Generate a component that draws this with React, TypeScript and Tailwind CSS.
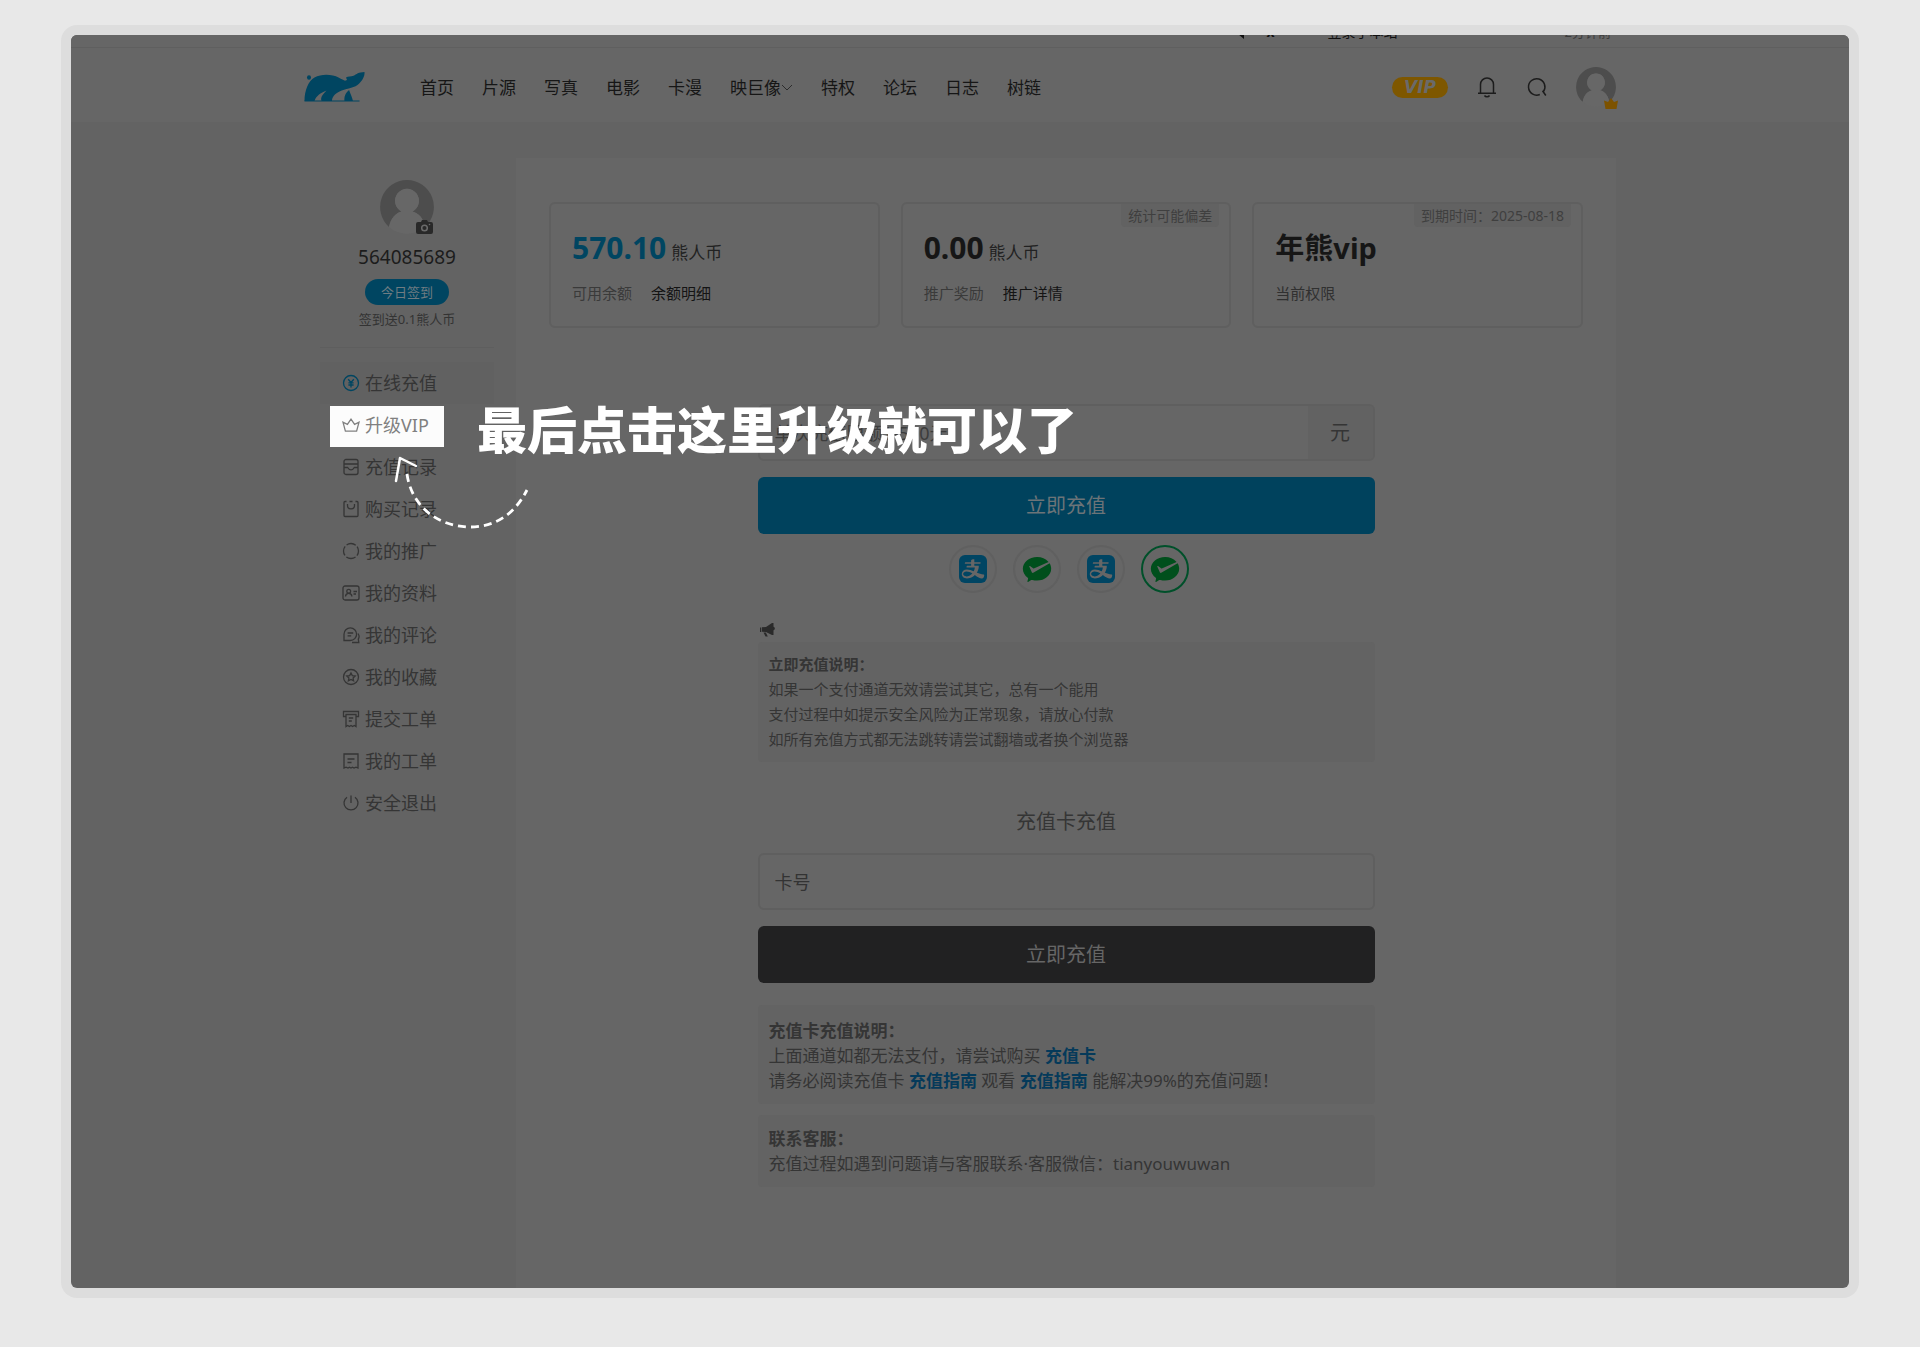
import type { ReactNode } from "react";
import { AiFillAlipaySquare } from "react-icons/ai";
import { RiWechatPayFill } from "react-icons/ri";

const navItems = ["首页", "片源", "写真", "电影", "卡漫", "映巨像", "特权", "论坛", "日志", "树链"];

type MenuItem = { label: string; icon: ReactNode; state?: "active" | "spot" };

const menuItems: MenuItem[] = [
  {
    label: "在线充值",
    state: "active",
    icon: (
      <>
        <circle cx="9" cy="9" r="7.5" />
        <path d="M6.2 5.2 9 8.4l2.8-3.2M9 8.4v5M6.4 8.8h5.2M6.4 11h5.2" />
      </>
    )
  },
  {
    label: "升级VIP",
    state: "spot",
    icon: <path d="M3.4 15.2h11.2L17 6.2l-4.4 2.2L9 3.2 5.4 8.4 1 6.2z" />
  },
  {
    label: "充值记录",
    icon: (
      <>
        <rect x="2" y="1.5" width="14" height="15" rx="2" />
        <path d="M2 6h14M2 9.500h3.600c.5 0 .8 2.400 3.400 2.400s2.900-2.400 3.400-2.400H16" />
      </>
    )
  },
  {
    label: "购买记录",
    icon: (
      <>
        <path d="M4.500 1.500H3q-1 0-1 1v13q0 1 1 1h12q1 0 1-1v-13q0-1-1-1h-1.500M7.500 1.500h3" />
        <path d="M5.500 4v1.500c0 4.600 7 4.600 7 0V4" />
      </>
    )
  },
  {
    label: "我的推广",
    icon: <circle cx="9" cy="9" r="7.5" strokeDasharray="9.800 1.980" strokeDashoffset="4.900" />
  },
  {
    label: "我的资料",
    icon: (
      <>
        <rect x="1" y="2" width="16" height="14" rx="2" />
        <circle cx="6.700" cy="7.200" r="1.900" />
        <path d="M3.500 12.500c.2-4.200 6.200-4.200 6.400 0M11.500 7.500H15M11.500 10h2.500" />
      </>
    )
  },
  {
    label: "我的评论",
    icon: (
      <>
        <path d="M2 14.500V8.200a6.300 6.300 0 1 1 6.300 6.300zM5.600 7h5.600M5.600 9.800h3.600" />
        <path d="M16 7.500c1.400 2 1.200 4.200.3 5.600l.5 3.400H10" />
      </>
    )
  },
  {
    label: "我的收藏",
    icon: (
      <>
        <circle cx="9" cy="9" r="7.5" />
        <path d="m9 5 1.300 2.600 2.900.4-2.100 2 .5 2.900L9 11.500l-2.600 1.400.5-2.900-2.100-2 2.900-.4z" />
      </>
    )
  },
  {
    label: "提交工单",
    icon: (
      <>
        <path d="M4 6.500H1.500v-5h15v5H14" />
        <path d="M4 4.500h10v12l-1.700-1-1.700 1-1.600-1-1.600 1-1.700-1-1.700 1zM6.800 8h4.400M6.800 11h3" />
      </>
    )
  },
  {
    label: "我的工单",
    icon: <path d="M2 2h14v14l-2-.8-2 .8-1.500-.8L9 16l-1.500-.8L6 16l-2-.8-2 .8zM5.500 7h7M5.500 10.500h4" />
  },
  {
    label: "安全退出",
    icon: <path d="M9 1.500V9M5 3.200a7 7 0 1 0 8 0" />
  }
];

const payMethods = [
  { name: "支付宝", type: "alipay" },
  { name: "微信支付", type: "wechat" },
  { name: "支付宝二", type: "alipay" },
  { name: "微信支付二", type: "wechat", selected: true }
];

function BearLogo() {
  return (
    <svg viewBox="0 0 60 30" className="h-[30px] w-[61px] fill-[#004561]" aria-hidden="true">
      <ellipse cx="4.500" cy="5.500" rx="2" ry="2.200" />
      <path d="M0 29C0 18 4 9 10 5.500 17 1.500 28 2.200 34 5.500c2.500 1.400 4.500 2.400 6.500 3.300L42.500 8l-1-2.500c2-1.200 5-.6 7.500-1.700C52 2.200 54 .2 60 0c.4 4-2 9-7 13-5 3.500-12 3.500-18 6.500-5 2.500-7.500 5.500-7.500 9.500H17c-1.500-4 2-7 5-10.500-6 2.500-10.500 5.500-12 10.500z" />
      <path d="M40 29c-.4-4 .6-8 4.600-11 1.200 3.500 2.900 7 3.900 11zM0 28.600h55v.8H0z" />
    </svg>
  );
}

function Avatar({ className }: { className: string }) {
  return (
    <svg viewBox="0 0 54 54" className={className} aria-hidden="true">
      <path fill="#4d4d4d" d="M27 0a27 27 0 0 1 18 47C43 37 38 33 32.500 31.500a12 12 0 1 0-11 0C15 33.500 11 38 9 47A27 27 0 0 1 27 0z" />
      <path fill="#676767" d="M9 47c2-9 6-13.500 12.500-15.500a12 12 0 1 1 11 0C38 33 43 37 45 47a27 27 0 0 1-36 0z" />
    </svg>
  );
}

function TopStrip() {
  return (
    <div className="h-[13px] overflow-hidden border-b border-[#5f5f5f]">
      <div className="mx-auto flex h-full w-full max-w-[1312px] items-end justify-end pr-[5px] pb-2 text-sm leading-[14px] text-[#101010]">
        <svg viewBox="0 0 14 14" className="mr-[18px] h-3.5 w-3.5 shrink-0 fill-current" aria-hidden="true">
          <path d="M1 5v4h3l6 5V0L4 5z" />
        </svg>
        <span className="mr-[53px] shrink-0 font-bold">x</span>
        <span className="mr-[167px] shrink-0">登录了本站</span>
        <span className="shrink-0 text-[13px] text-[#3c3c3c]">2分钟前</span>
      </div>
    </div>
  );
}

function Header() {
  return (
    <header className="bg-[#666666]">
      <div className="mx-auto flex h-[74px] w-full max-w-[1312px] items-center pt-1">
        <a href="#home" aria-label="首页" className="shrink-0">
          <BearLogo />
        </a>
        <nav className="ml-[55px] flex gap-7 pt-0.5 text-[17px] leading-6 text-[#161616]">
          {navItems.map((item) => (
            <a key={item} href={`#${item}`} className="flex items-center whitespace-nowrap">
              {item}
              {item === "映巨像" && (
                <svg viewBox="0 0 12 8" className="h-2 w-3 fill-none stroke-[#2c2c2c]" aria-hidden="true">
                  <path d="m1 1 5 5 5-5" />
                </svg>
              )}
            </a>
          ))}
        </nav>
        <div className="ml-auto flex items-center">
          <a href="#vip" aria-label="VIP" className="flex h-[21px] w-14 items-center justify-center rounded-full bg-[#7e5700]">
            <span className="font-['DejaVu_Sans',sans-serif] text-[17px] leading-5 font-bold text-[#6a6a6a] italic">VIP</span>
          </a>
          <button type="button" aria-label="消息" className="ml-[29px]">
            <svg viewBox="0 0 20 22" className="h-[22px] w-5 fill-none stroke-[#1c1c1c] stroke-[1.500]" aria-hidden="true">
              <path d="M3.500 17V8.500a6.500 6.500 0 0 1 13 0V17M1 17.300h18M7.500 19.500c1 1.600 4 1.600 5 0" />
            </svg>
          </button>
          <button type="button" aria-label="搜索" className="ml-[30px]">
            <svg viewBox="0 0 20 20" className="h-5 w-5 fill-none stroke-[#1c1c1c] stroke-[1.500]" aria-hidden="true">
              <path d="M12.800 17.500A8.200 8.200 0 1 1 16.500 14.500M15.500 13.800l3.300 4.700" />
            </svg>
          </button>
          <a href="#user" aria-label="个人中心" className="relative ml-[29px]">
            <Avatar className="h-10 w-10" />
            <svg viewBox="0 0 14 11" className="absolute -right-0.5 -bottom-0.5 h-[11px] w-3.5 fill-[#7c5200]" aria-hidden="true">
              <path d="M0 2.500 4 4l3-4 3 4 4-1.500L12.500 11h-11z" />
            </svg>
          </a>
        </div>
      </div>
    </header>
  );
}

function Guide() {
  return (
    <>
      <p className="pointer-events-none absolute top-1/2 left-[157px] z-20 -translate-y-1/2 pt-2.5 text-[50px] leading-[60px] font-black whitespace-nowrap text-white">
        最后点击这里升级就可以了
      </p>
      <svg
        viewBox="0 0 140 88"
        className="pointer-events-none absolute top-full left-[70px] z-20 h-[88px] w-[140px] fill-none stroke-white"
        aria-hidden="true"
      >
        <path d="M6 35 10 12 26 20" strokeWidth="2.500" strokeLinecap="round" strokeLinejoin="round" />
        <path d="M17 28c4 30 28 52 62 53 26 0 45-12 58-37" strokeWidth="2.800" strokeDasharray="8 5" />
      </svg>
    </>
  );
}

function Sidebar() {
  return (
    <aside className="w-[174px] shrink-0 pt-[58px]">
      <div className="flex flex-col items-center border-b border-[#5e5e5e] pb-[18px]">
        <div className="relative">
          <Avatar className="h-[54px] w-[54px]" />
          <svg viewBox="0 0 17 14" className="absolute right-px bottom-0 h-3.5 w-[17px]" aria-hidden="true">
            <path fill="#292929" d="M2 2h3l1-2h5l1 2h3q2 0 2 2v8q0 2-2 2H2q-2 0-2-2V4q0-2 2-2z" />
            <circle cx="8.500" cy="8" r="2.800" fill="none" stroke="#6a6a6a" strokeWidth="1.500" />
            <circle cx="13.500" cy="4.500" r=".8" fill="#6a6a6a" />
          </svg>
        </div>
        <div className="mt-[11px] text-[19px] leading-6 text-[#1c1c1c]">564085689</div>
        <button type="button" className="mt-2.5 h-[26px] rounded-full bg-[#004561] px-4 text-[13px] leading-5 text-[#6f7c82]">
          今日签到
        </button>
        <div className="mt-1 text-[13px] leading-5 text-[#333333]">签到送0.1熊人币</div>
      </div>
      <ul className="mt-3.5">
        {menuItems.map(({ label, icon, state }) => (
          <li key={label} className={state === "active" ? "relative bg-[#616161]" : "relative"}>
            {state === "spot" && <span className="absolute top-0.5 left-2.5 h-[41px] w-[114px] bg-[#fcfcfc]" />}
            <a
              href={`#${label}`}
              className={`relative flex h-[42px] items-center gap-[5px] pl-[22px] text-lg whitespace-nowrap ${
                state === "spot" ? "text-[#808080]" : "text-[#353535]"
              }`}
            >
              <svg
                viewBox="0 0 18 18"
                className={`h-[18px] w-[18px] shrink-0 fill-none stroke-[1.300] ${
                  state === "active" ? "stroke-[#004561]" : "stroke-current"
                }`}
                aria-hidden="true"
              >
                {icon}
              </svg>
              {label}
            </a>
            {state === "spot" && <Guide />}
          </li>
        ))}
      </ul>
    </aside>
  );
}

function StatCard({ badge, children }: { badge?: string; children: ReactNode }) {
  return (
    <div className="relative h-[126px] flex-1 rounded-md border-2 border-[#5f5f5f] px-[21px] pt-[23px]">
      {badge && (
        <span className="absolute top-0 right-2.5 rounded-b bg-[#626262] px-[7px] text-sm leading-[23px] text-[#3f3f3f]">{badge}</span>
      )}
      {children}
    </div>
  );
}

function Note({ title, className, children }: { title: string; className: string; children: ReactNode }) {
  return (
    <section className={`rounded bg-[#636363] px-[11px] leading-[25px] text-[#353535] ${className}`}>
      <h3 className="font-bold">{title}</h3>
      {children}
    </section>
  );
}

function BlueLink({ children }: { children: ReactNode }) {
  return (
    <a href="#card" className="font-bold text-[#053a5a]">
      {children}
    </a>
  );
}

function Recharge() {
  return (
    <div className="mx-auto mt-[76px] w-full max-w-[617px]">
      <form>
        <div className="flex h-[57px] overflow-hidden rounded-md border-2 border-[#5f5f5f]">
          <input
            type="text"
            aria-label="充值金额"
            placeholder="单次充值限额1-500元"
            className="min-w-0 flex-1 bg-transparent px-[15px] text-lg outline-none placeholder:text-[#3c3c3c]"
          />
          <span className="flex w-[65px] items-center justify-center bg-[#626262] text-xl text-[#353535]">元</span>
        </div>
        <button type="button" className="mt-4 h-[57px] w-full rounded-md bg-[#00425d] text-xl text-[#6c7478]">
          立即充值
        </button>
        <div className="mt-[11px] flex justify-center gap-4 pl-1.5">
          {payMethods.map(({ name, type, selected }) => (
            <button
              key={name}
              type="button"
              aria-label={name}
              className={`flex h-12 w-12 items-center justify-center rounded-full border-2 ${
                selected ? "border-[#00502a]" : "border-[#606060]"
              }`}
            >
              {type === "alipay" ? (
                <span className="flex h-7 w-7 items-center justify-center overflow-hidden rounded-md">
                  <AiFillAlipaySquare size={40} color="#004563" className="shrink-0" />
                </span>
              ) : (
                <RiWechatPayFill size={34} color="#004f1c" />
              )}
            </button>
          ))}
        </div>
      </form>

      <svg viewBox="0 0 16 14" className="mt-[30px] ml-0.5 h-3.5 w-4 fill-[#2a2a2a]" aria-hidden="true">
        <path d="M0 4.500h1.300V9H0zM2 4.200 6 4v5l-4-.3zM6 3.900 12 0h1.500v3.800c1.800.4 1.800 3 0 3.400V12H12L6 9.100zM3.500 9.500h2.300l2 4H5.500z" />
      </svg>
      <Note title="立即充值说明：" className="mt-[5px] py-2.5 text-[15px]">
        <p>如果一个支付通道无效请尝试其它，总有一个能用</p>
        <p>支付过程中如提示安全风险为正常现象，请放心付款</p>
        <p>如所有充值方式都无法跳转请尝试翻墙或者换个浏览器</p>
      </Note>

      <form className="mt-[45px]">
        <label htmlFor="card-number" className="block text-center text-xl leading-[30px] text-[#353535]">
          充值卡充值
        </label>
        <input
          id="card-number"
          type="text"
          placeholder="卡号"
          className="mt-4 h-[57px] w-full rounded-md border-2 border-[#5f5f5f] bg-transparent px-[15px] text-lg outline-none placeholder:text-[#333333]"
        />
        <button type="button" className="mt-4 h-[57px] w-full rounded-md bg-[#212122] text-xl text-[#666666]">
          立即充值
        </button>
      </form>

      <Note title="充值卡充值说明：" className="mt-[22px] pt-[13px] pb-[11px] text-[17px]">
        <p>
          上面通道如都无法支付，请尝试购买 <BlueLink>充值卡</BlueLink>
        </p>
        <p>
          请务必阅读充值卡 <BlueLink>充值指南</BlueLink> 观看 <BlueLink>充值指南</BlueLink> 能解决99%的充值问题！
        </p>
      </Note>
      <Note title="联系客服：" className="mt-[11px] py-[11px] text-[17px]">
        <p>充值过程如遇到问题请与客服联系·客服微信：tianyouwuwan</p>
      </Note>
    </div>
  );
}

export default function App() {
  return (
    <div className="min-h-screen bg-[#e8e8e8] px-[61px] pt-[25px] pb-[49px] font-['Noto_Sans','Noto_Sans_CJK_SC',sans-serif]">
      <div className="rounded-2xl bg-[#dddddd] p-2.5">
        <div className="overflow-hidden rounded-md bg-[#636363]">
          <div className="bg-[#666666]">
            <TopStrip />
            <Header />
          </div>
          <div className="mx-auto flex w-full max-w-[1312px] gap-[22px] pl-4">
            <Sidebar />
            <main className="mt-9 min-w-0 flex-1 bg-[#666666] px-[33px] pt-11 pb-[101px]">
              <div className="flex gap-[21px]">
                <StatCard>
                  <div className="flex h-[42px] items-baseline gap-[5px] leading-[42px] text-[#222222]">
                    <strong className="text-[30px] font-bold text-[#004561]">570.10</strong>
                    <span className="text-[17px]">熊人币</span>
                  </div>
                  <div className="mt-1 flex gap-[19px] text-[15px] leading-10 text-[#3a3a3a]">
                    <span>可用余额</span>
                    <a href="#balance" className="text-[#141414]">余额明细</a>
                  </div>
                </StatCard>
                <StatCard badge="统计可能偏差">
                  <div className="flex h-[42px] items-baseline gap-[5px] leading-[42px] text-[#222222]">
                    <strong className="text-[30px] font-bold text-[#161616]">0.00</strong>
                    <span className="text-[17px]">熊人币</span>
                  </div>
                  <div className="mt-1 flex gap-[19px] text-[15px] leading-10 text-[#3a3a3a]">
                    <span>推广奖励</span>
                    <a href="#promotion" className="text-[#141414]">推广详情</a>
                  </div>
                </StatCard>
                <StatCard badge="到期时间：2025-08-18">
                  <strong className="block text-[29px] leading-[42px] font-bold text-[#161616]">年熊vip</strong>
                  <div className="mt-1 text-[15px] leading-10 text-[#303030]">当前权限</div>
                </StatCard>
              </div>
              <Recharge />
            </main>
          </div>
        </div>
      </div>
    </div>
  );
}
